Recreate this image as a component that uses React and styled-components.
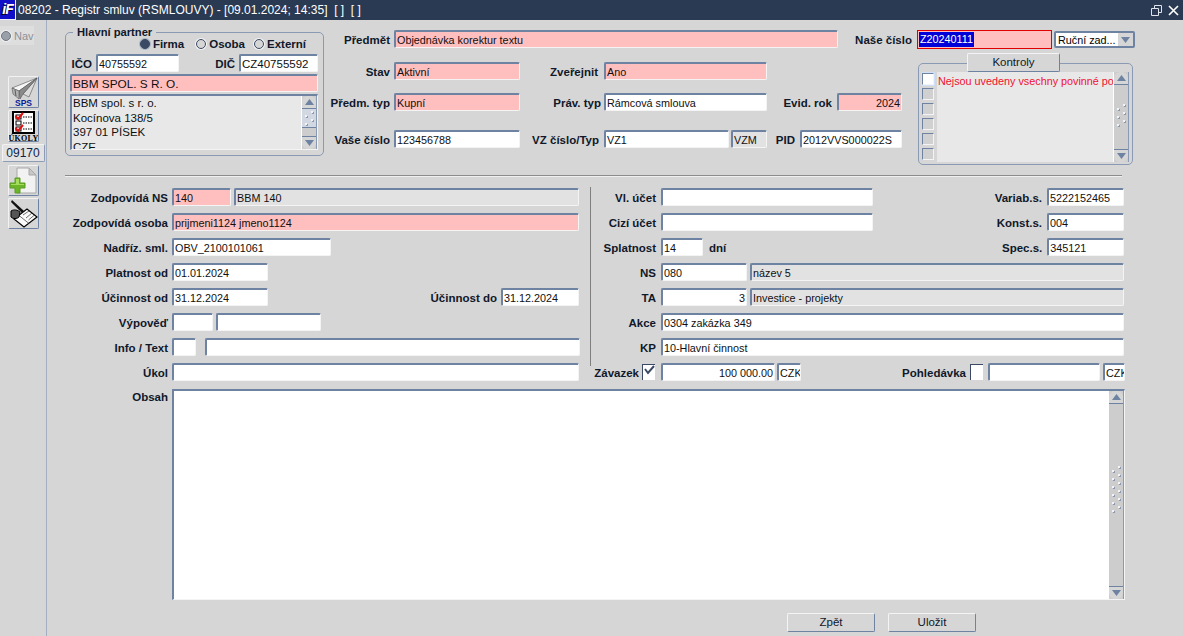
import React from "react"
import styled, { createGlobalStyle } from "styled-components"

const Global = createGlobalStyle`
  html, body { margin: 0; height: 100%; overflow: hidden; background: #d6d6d6; }
  body { font-family: "Liberation Sans", Arial, sans-serif; font-size: 12px; color: #000; }
`

const Window = styled.div`
  width: 1183px;
  height: 636px;
  display: flex;
  flex-direction: column;
  overflow: hidden;
`
const TitleBar = styled.div`
  height: 20px;
  background: #2a3a52;
  color: #fff;
  display: flex;
  align-items: center;
  font-size: 12px;
  flex: none;
`
const Logo = styled.div`
  width: 16px;
  height: 20px;
  box-sizing: border-box;
  background: #1010c8;
  border-right: 1px solid #f0f0fa;
  border-bottom: 1px solid #f0f0fa;
  color: #fff;
  font: italic bold 14px "Liberation Sans", sans-serif;
  letter-spacing: -1px;
  text-align: center;
  line-height: 18px;
  text-shadow: -1px 1px 0 #000;
  margin-right: 2px;
`
const TitleText = styled.span`
  flex: 1;
  white-space: pre;
`
const TitleIcons = styled.div`
  display: flex;
  gap: 6px;
  padding-right: 4px;
  align-items: center;
`
const Body = styled.div`
  flex: 1;
  display: flex;
  min-height: 0;
`
const Sidebar = styled.div`
  width: 46px;
  border-right: 1px solid #a4b0c2;
  flex: none;
  display: flex;
  flex-direction: column;
  align-items: center;
`
const NavRadio = styled.div`
  align-self: flex-start;
  width: 34px;
  height: 19px;
  margin-top: 6px;
  background: #dedede;
  color: #8c9098;
  display: flex;
  align-items: center;
  gap: 3px;
  font-size: 11px;
  padding-left: 1px;
  box-sizing: border-box;
  white-space: nowrap;
`
const NavDot = styled.span`
  width: 8px;
  height: 8px;
  flex: none;
  border-radius: 50%;
  background: #9aa0a8;
  border: 1px solid #6e7684;
  box-shadow: 0 0 0 1px #f0f0f0;
`
const ToolButton = styled.div`
  width: 31px;
  height: ${(p) => p.$h || 32}px;
  margin-top: ${(p) => p.$mt || 0}px;
  box-sizing: border-box;
  border: 1px solid;
  border-color: #f2f2f2 #6e82a2 #6e82a2 #f2f2f2;
  border-radius: 2px;
  background: #d6d6d6;
  display: flex;
  align-items: center;
  justify-content: center;
`
const CountBox = styled.div`
  width: 43px;
  height: 18px;
  margin-top: 2px;
  box-sizing: border-box;
  border: 1px solid;
  border-color: #f2f2f2 #8c9cb4 #8c9cb4 #f2f2f2;
  border-radius: 2px;
  background: #e2e2e2;
  color: #10244a;
  font-size: 12px;
  line-height: 16px;
  text-align: center;
`
const Main = styled.div`
  flex: 1;
  padding-left: 18px;
  min-width: 0;
`
const TopArea = styled.div`
  display: flex;
  height: 155px;
`
const Partner = styled.fieldset`
  width: 259px;
  height: 130px;
  margin: 6px 0 0;
  box-sizing: border-box;
  padding: 0 5px 0 4px;
  border: 1px solid #8a9ab4;
  border-radius: 5px;
  flex: none;
`
const Legend = styled.legend`
  font-weight: bold;
  font-size: 11.2px;
  line-height: 12px;
  padding: 0 4px;
  margin-left: 3px;
  color: #10182a;
`
const RadioRow = styled.div`
  display: flex;
  justify-content: flex-end;
  gap: 9px;
  padding-right: 12px;
  height: 16px;
  align-items: center;
  margin-top: -2px;
`
const RadioItem = styled.label`
  display: flex;
  align-items: center;
  gap: 3px;
  margin-right: ${(p) => p.$mr || 0}px;
  font-weight: bold;
  font-size: 11.5px;
  color: #10182a;
`
const RadioMark = styled.span`
  width: 8px;
  height: 8px;
  border-radius: 50%;
  background: ${(p) => (p.$on ? "#3a4a64" : "#d6d6d6")};
  border: 1px solid #3a4a64;
  box-shadow: 0 0 0 1px ${(p) => (p.$on ? "#a8b4c4" : "#f4f4f4")};
`
const Row = styled.div`
  display: flex;
  align-items: center;
  height: ${(p) => p.$h || 18}px;
  margin-top: ${(p) => p.$mt || 0}px;
`
const Label = styled.div`
  width: ${(p) => p.$w}px;
  padding-right: ${(p) => (p.$pr === undefined ? 4 : p.$pr)}px;
  padding-top: 2px;
  box-sizing: border-box;
  flex: none;
  text-align: right;
  font-weight: bold;
  font-size: 11.5px;
  color: #10182a;
  white-space: nowrap;
`
const colors = { pink: "#ffbfbf", gray: "#e2e2e2", white: "#ffffff" }
const Field = styled.div`
  width: ${(p) => p.$w}px;
  height: ${(p) => p.$h || 18}px;
  margin-left: ${(p) => p.$ml || 0}px;
  box-sizing: border-box;
  flex: none;
  background: ${(p) => colors[p.$c || "white"]};
  border: 1px solid;
  border-top: 2px solid #6e82a2;
  border-left: 2px solid #6e82a2;
  border-right-color: #f4f4f4;
  border-bottom-color: #f4f4f4;
  border-radius: 2px;
  padding: 0 1px;
  font-size: ${(p) => p.$fs || 10.8}px;
  line-height: 16px;
  text-align: ${(p) => (p.$right ? "right" : "left")};
  color: #101010;
  white-space: nowrap;
  overflow: hidden;
`
const ActiveField = styled.div`
  width: 135px;
  height: 19px;
  box-sizing: border-box;
  border: 1px solid #e00000;
  background: #ffbfbf;
  padding: 1px 1px 0;
  flex: none;
  font-size: 10.8px;
  line-height: 15px;
`
const Selected = styled.span`
  background: #0000d8;
  color: #fff;
  display: inline-block;
  padding: 0 1px;
`
const SelectBox = styled.div`
  width: 81px;
  height: 17px;
  margin: 1px 0 0 2px;
  box-sizing: border-box;
  border: 2px solid #6e82a2;
  border-radius: 2px;
  background: #fff;
  display: flex;
  flex: none;
  font-size: 10.8px;
  line-height: 14px;
  padding-left: 2px;
`
const SelectText = styled.span`
  flex: 1;
  white-space: nowrap;
`
const SelectArrow = styled.span`
  width: 15px;
  background: #d6d6d6;
  display: flex;
  align-items: center;
  justify-content: center;
`
const AddressBox = styled.div`
  margin-top: 2px;
  height: 56px;
  box-sizing: border-box;
  border-top: 2px solid #6e82a2;
  border-left: 2px solid #6e82a2;
  border-right: 1px solid #f4f4f4;
  border-bottom: 1px solid #f4f4f4;
  background: #e8e8e8;
  display: flex;
  overflow: hidden;
`
const AddressText = styled.div`
  flex: 1;
  padding: 0 0 0 1px;
  font-size: 11.5px;
  line-height: 14.7px;
  color: #101010;
`
const Scroll = styled.div`
  width: 14px;
  flex: none;
  background: #cdcdcd;
  border-left: 1px solid #fff;
  border-right: 1px solid #8a9ab4;
  display: flex;
  flex-direction: column;
  align-items: center;
`
const ScrollEnd = styled.div`
  width: 100%;
  height: 13px;
  flex: none;
  display: flex;
  align-items: center;
  justify-content: center;
  background: #d6d6d6;
  border-radius: ${(p) => (p.$edge === "bottom" ? "6px 6px 0 0" : "0 0 6px 6px")};
  box-sizing: border-box;
  border-${(p) => p.$edge}: 1px solid #6e82a2;
`
const Thumb = styled.div`
  width: 100%;
  flex: ${(p) => (p.$short ? "0 0 19px" : "1")};
  background: ${(p) => (p.$short ? "#d2d8e2" : "transparent")};
  border-bottom: ${(p) => (p.$short ? "1px solid #6e82a2" : "0")};
  box-sizing: border-box;
  padding-bottom: ${(p) => p.$lift || 0}px;
  display: flex;
  align-items: center;
  justify-content: center;
  margin-bottom: auto;
`
const Grip = styled.div`
  width: 8px;
  display: grid;
  grid-template-columns: 2px 2px;
  justify-content: space-between;
  row-gap: 2px;
`
const GripDot = styled.span`
  width: 2px;
  height: 2px;
  background: #f4f4f4;
  box-shadow: 1px 1px 0 #8a9ab4;
  margin-top: ${(p) => (p.$odd ? 0 : 4)}px;
`
const Center = styled.div`
  width: 593px;
  flex: none;
  padding-top: 10px;
`
const Right = styled.div`
  flex: none;
  padding-top: 10px;
  width: 221px;
`
const RightRow = styled.div`
  display: flex;
  align-items: flex-start;
  height: 18px;
`
const ChecksGroup = styled.div`
  margin: 15px 0 0 1px;
  width: 215px;
  height: 102px;
  box-sizing: border-box;
  border: 1px solid #8a9ab4;
  border-radius: 5px;
  position: relative;
  display: flex;
  padding: 8px 3px 2px 3px;
`
const ChecksTab = styled.div`
  position: absolute;
  left: 48px;
  top: -11px;
  width: 93px;
  height: 19px;
  box-sizing: border-box;
  border: 1px solid;
  border-color: #f4f4f4 #6e82a2 #6e82a2 #f4f4f4;
  border-radius: 2px;
  background: #d6d6d6;
  text-align: center;
  font-size: 11.5px;
  line-height: 17px;
  color: #10182a;
`
const CheckCol = styled.div`
  width: 15px;
  display: flex;
  flex-direction: column;
  gap: 3px;
  padding-top: 1px;
  flex: none;
`
const CheckBox = styled.div`
  width: 12px;
  height: 12px;
  box-sizing: border-box;
  border-top: 1px solid #6e82a2;
  border-left: 1px solid #6e82a2;
  border-right: 1px solid #f4f4f4;
  border-bottom: 1px solid #f4f4f4;
  background: ${(p) => (p.$on ? "#fff" : "#d0d0d0")};
  box-shadow: ${(p) => (p.$on ? "0 0 0 1px #cfe0f8" : "none")};
`
const ChecksList = styled.div`
  flex: 1;
  min-width: 0;
  background: #e8e8e8;
  color: #f01030;
  font-size: 10.8px;
  line-height: 14px;
  padding: 2px 0 0 1px;
  white-space: nowrap;
  overflow: hidden;
`
const Rule = styled.div`
  width: 1057px;
  height: 2px;
  background: #8c8c8c;
  border-bottom: 1px solid #f0f0f0;
  box-sizing: border-box;
`
const Lower = styled.div`
  display: flex;
  padding-top: 11px;
`
const Col = styled.div`
  display: flex;
  flex-direction: column;
  gap: 7px;
  width: ${(p) => p.$w}px;
  flex: none;
`
const Divider = styled.div`
  width: 1px;
  height: 179px;
  background: #808080;
  flex: none;
  margin-top: -1px;
`
const Unit = styled.span`
  font-weight: bold;
  font-size: 11.5px;
  margin-left: 6px;
  padding-top: 2px;
  color: #10182a;
`
const Tick = styled.div`
  width: 13px;
  height: 16px;
  flex: none;
  box-sizing: border-box;
  background: #fff;
  border-top: 1px solid #3a4a64;
  border-left: 1px solid #3a4a64;
  display: flex;
  align-items: flex-start;
  justify-content: center;
`
const MemoRow = styled.div`
  display: flex;
  align-items: flex-start;
  margin-top: 8px;
`
const Memo = styled.div`
  width: 953px;
  height: 211px;
  flex: none;
  box-sizing: border-box;
  background: #fff;
  border-top: 2px solid #6e82a2;
  border-left: 2px solid #6e82a2;
  border-right: 1px solid #f4f4f4;
  border-bottom: 1px solid #f4f4f4;
  display: flex;
  justify-content: flex-end;
`
const Actions = styled.div`
  display: flex;
  gap: 13px;
  margin: 13px 0 0 722px;
`
const ActionButton = styled.div`
  width: 88px;
  height: 19px;
  box-sizing: border-box;
  border: 1px solid;
  border-color: #f4f4f4 #6e82a2 #6e82a2 #f4f4f4;
  border-radius: 2px;
  text-align: center;
  font-size: 11.5px;
  line-height: 17px;
  color: #10182a;
`

const Up = () => (
  <svg width="9" height="6" viewBox="0 0 9 6"><path d="M4.5 0 9 6H0z" fill="#6e82a2" /></svg>
)
const Down = () => (
  <svg width="9" height="6" viewBox="0 0 9 6"><path d="M0 0h9L4.5 6z" fill="#6e82a2" /></svg>
)

const ScrollBar = ({ dots, short, lift }) => (
  <Scroll>
    <ScrollEnd $edge="bottom"><Up /></ScrollEnd>
    <Thumb $short={short} $lift={lift}>
      <Grip>
        {Array.from({ length: dots }).map((_, i) => (
          <GripDot key={i} $odd={i % 2 === 1} />
        ))}
      </Grip>
    </Thumb>
    <ScrollEnd $edge="top"><Down /></ScrollEnd>
  </Scroll>
)

const PlaneIcon = () => (
  <svg width="29" height="30" viewBox="0 0 29 30">
    <path d="M28 1 3 11l7 3z" fill="#f6f6f6" stroke="#666" strokeWidth="0.7" />
    <path d="M28 1 14 17l6 3z" fill="#dcdcdc" stroke="#666" strokeWidth="0.7" />
    <path d="M28 1 10 14l1 8 3-5z" fill="#8a8a8a" stroke="#555" strokeWidth="0.6" />
    <path d="M3 11l1 6 6 5v-8z" fill="#b4b4b4" stroke="#555" strokeWidth="0.6" />
    <path d="M6 13l1 6" stroke="#444" strokeWidth="0.8" fill="none" />
    <text x="14.5" y="28.5" textAnchor="middle" fontFamily="Liberation Sans" fontSize="8.5" fontWeight="bold" fill="#0a1a9a">SPS</text>
  </svg>
)
const TasksIcon = () => (
  <svg width="29" height="30" viewBox="0 0 29 30">
    <rect x="4" y="1" width="21" height="21" fill="#fff" stroke="#000" strokeWidth="2" />
    <rect x="7" y="4" width="5" height="4" fill="#fff" stroke="#000" />
    <rect x="7" y="10" width="5" height="4" fill="#fff" stroke="#000" />
    <rect x="7" y="16" width="5" height="4" fill="#fff" stroke="#000" />
    <path d="M6.5 5l2.5 3 5-6M6.5 17l2.5 3 5-6" stroke="#e01010" strokeWidth="2" fill="none" />
    <path d="M14 6h9M14 12h9M14 18h9" stroke="#000" strokeDasharray="1.5 1" fill="none" />
    <text x="14.5" y="29.5" textAnchor="middle" fontFamily="Liberation Serif" fontSize="8" fontWeight="bold" letterSpacing="0.3" fill="#000">ÚKOLY</text>
  </svg>
)
const AddIcon = () => (
  <svg width="29" height="29" viewBox="0 0 29 29">
    <path d="M8 2h12l7 7v18H8z" fill="#f2f2f2" stroke="#a8a8a8" />
    <path d="M20 2v7h7z" fill="#c8c8c8" stroke="#a8a8a8" />
    <path d="M6 12h5v5h5v5h-5v5H6v-5H1v-5h5z" fill="#6cb52a" stroke="#5a9c22" />
    <path d="M7 13h3v5H7zM2 18h13v1H2z" fill="#a4dc5c" />
  </svg>
)
const SignIcon = () => (
  <svg width="29" height="29" viewBox="0 0 29 29">
    <path d="M5 20 18 10l10 8-13 10z" fill="#fafafa" stroke="#000" strokeWidth="1.2" />
    <path d="M10 16.500l10 8M20 12l-6 4M23 14l-6 5M25.500 16l-6 5" stroke="#333" strokeWidth="0.7" fill="none" />
    <path d="M3 1l12 11-2 2L2 3z" fill="#111" />
    <path d="M2 12c3-2 7-1 9 1l-1 5c-2 2-6 2-8 0z" fill="#555" stroke="#000" />
  </svg>
)

export default function App() {
  return (
    <>
      <Global />
      <Window>
        <TitleBar>
          <Logo>iF</Logo>
          <TitleText>08202 - Registr smluv (RSMLOUVY) - [09.01.2024; 14:35]  [ ]  [ ]</TitleText>
          <TitleIcons>
            <svg width="11" height="11" viewBox="0 0 11 11" fill="none" stroke="#dfe4ec">
              <path d="M.5 3.5h7v7h-7zM3.5 3V.5h7v7H8" />
            </svg>
            <svg width="11" height="11" viewBox="0 0 11 11" stroke="#fff" strokeWidth="1.6">
              <path d="M1 1l9 9M10 1l-9 9" />
            </svg>
          </TitleIcons>
        </TitleBar>
        <Body>
          <Sidebar>
            <NavRadio><NavDot />Nav</NavRadio>
            <ToolButton $mt={31}><PlaneIcon /></ToolButton>
            <ToolButton $mt={2}><TasksIcon /></ToolButton>
            <CountBox>09170</CountBox>
            <ToolButton $mt={3} $h={31}><AddIcon /></ToolButton>
            <ToolButton $mt={2} $h={31}><SignIcon /></ToolButton>
          </Sidebar>
          <Main>
            <TopArea>
              <Partner>
                <Legend>Hlavní partner</Legend>
                <RadioRow>
                  <RadioItem $mr={3}><RadioMark $on />Firma</RadioItem>
                  <RadioItem><RadioMark />Osoba</RadioItem>
                  <RadioItem><RadioMark />Externí</RadioItem>
                </RadioRow>
                <Row $mt={2}>
                  <Label $w={26}>IČO</Label>
                  <Field $w={83}>40755592</Field>
                  <Label $w={60}>DIČ</Label>
                  <Field $w={79} $fs={11.5}>CZ40755592</Field>
                </Row>
                <Row $mt={2}>
                  <Field $w={248} $c="pink" $fs={11.8}>BBM SPOL. S R. O.</Field>
                </Row>
                <AddressBox>
                  <AddressText>
                    BBM spol. s r. o.<br />
                    Kocínova 138/5<br />
                    397 01 PÍSEK<br />
                    CZE
                  </AddressText>
                  <ScrollBar dots={4} short />
                </AddressBox>
              </Partner>
              <Center>
                <Row>
                  <Label $w={70}>Předmět</Label>
                  <Field $w={444} $c="pink">Objednávka korektur textu</Field>
                  <Label $w={79} $pr={5}>Naše číslo</Label>
                </Row>
                <Row $mt={14}>
                  <Label $w={70}>Stav</Label>
                  <Field $w={126} $c="pink">Aktivní</Field>
                  <Label $w={84} $pr={6}>Zveřejnit</Label>
                  <Field $w={163} $c="pink">Ano</Field>
                </Row>
                <Row $mt={13}>
                  <Label $w={70}>Předm. typ</Label>
                  <Field $w={126} $c="pink">Kupní</Field>
                  <Label $w={84} $pr={3}>Práv. typ</Label>
                  <Field $w={163}>Rámcová smlouva</Field>
                  <Label $w={70} $pr={5}>Evid. rok</Label>
                  <Field $w={65} $c="pink" $right>2024</Field>
                </Row>
                <Row $mt={19}>
                  <Label $w={70}>Vaše číslo</Label>
                  <Field $w={126}>123456788</Field>
                  <Label $w={84} $pr={5}>VZ číslo/Typ</Label>
                  <Field $w={125}>VZ1</Field>
                  <Field $w={36} $ml={2} $c="gray">VZM</Field>
                  <Label $w={33} $pr={5}>PID</Label>
                  <Field $w={102}>2012VVS000022S</Field>
                </Row>
              </Center>
              <Right>
                <RightRow>
                  <ActiveField><Selected>Z20240111</Selected></ActiveField>
                  <SelectBox>
                    <SelectText>Ruční zad...</SelectText>
                    <SelectArrow><Down /></SelectArrow>
                  </SelectBox>
                </RightRow>
                <ChecksGroup>
                  <ChecksTab>Kontroly</ChecksTab>
                  <CheckCol>
                    <CheckBox $on />
                    <CheckBox />
                    <CheckBox />
                    <CheckBox />
                    <CheckBox />
                    <CheckBox />
                  </CheckCol>
                  <ChecksList>Nejsou uvedeny vsechny povinné po</ChecksList>
                  <ScrollBar dots={6} lift={4} />
                </ChecksGroup>
              </Right>
            </TopArea>
            <Rule />
            <Lower>
              <Col $w={525}>
                <Row>
                  <Label $w={107}>Zodpovídá NS</Label>
                  <Field $w={59} $c="pink">140</Field>
                  <Field $w={345} $ml={3} $c="gray">BBM 140</Field>
                </Row>
                <Row>
                  <Label $w={107}>Zodpovídá osoba</Label>
                  <Field $w={407} $c="pink">prijmeni1124 jmeno1124</Field>
                </Row>
                <Row>
                  <Label $w={107}>Nadříz. sml.</Label>
                  <Field $w={159}>OBV_2100101061</Field>
                </Row>
                <Row>
                  <Label $w={107}>Platnost od</Label>
                  <Field $w={96}>01.01.2024</Field>
                </Row>
                <Row>
                  <Label $w={107}>Účinnost od</Label>
                  <Field $w={96}>31.12.2024</Field>
                  <Label $w={233}>Účinnost do</Label>
                  <Field $w={78}>31.12.2024</Field>
                </Row>
                <Row>
                  <Label $w={107}>Výpověď</Label>
                  <Field $w={41}></Field>
                  <Field $w={105} $ml={3}></Field>
                </Row>
                <Row>
                  <Label $w={107}>Info / Text</Label>
                  <Field $w={24}></Field>
                  <Field $w={375} $ml={9}></Field>
                </Row>
                <Row>
                  <Label $w={107}>Úkol</Label>
                  <Field $w={407}></Field>
                </Row>
              </Col>
              <Divider />
              <Col $w={535}>
                <Row>
                  <Label $w={70} $pr={5}>Vl. účet</Label>
                  <Field $w={212}></Field>
                  <Label $w={174} $pr={5}>Variab.s.</Label>
                  <Field $w={77}>5222152465</Field>
                </Row>
                <Row>
                  <Label $w={70} $pr={5}>Cizí účet</Label>
                  <Field $w={212}></Field>
                  <Label $w={174} $pr={5}>Konst.s.</Label>
                  <Field $w={77}>004</Field>
                </Row>
                <Row>
                  <Label $w={70} $pr={5}>Splatnost</Label>
                  <Field $w={42}>14</Field>
                  <Unit>dní</Unit>
                  <Label $w={321} $pr={5}>Spec.s.</Label>
                  <Field $w={77}>345121</Field>
                </Row>
                <Row>
                  <Label $w={70} $pr={5}>NS</Label>
                  <Field $w={86}>080</Field>
                  <Field $w={374} $ml={3} $c="gray">název 5</Field>
                </Row>
                <Row>
                  <Label $w={70} $pr={5}>TA</Label>
                  <Field $w={86} $right>3</Field>
                  <Field $w={374} $ml={3} $c="gray">Investice - projekty</Field>
                </Row>
                <Row>
                  <Label $w={70} $pr={5}>Akce</Label>
                  <Field $w={463}>0304 zakázka 349</Field>
                </Row>
                <Row>
                  <Label $w={70} $pr={5}>KP</Label>
                  <Field $w={463}>10-Hlavní činnost</Field>
                </Row>
                <Row>
                  <Label $w={51} $pr={3}>Závazek</Label>
                  <Tick>
                    <svg width="11" height="10" viewBox="0 0 11 10"><path d="M1 4l3 4 6-7" stroke="#3a4a64" strokeWidth="2" fill="none" /></svg>
                  </Tick>
                  <Field $w={114} $ml={6} $right>100 000.00</Field>
                  <Field $w={24} $ml={2}>CZK</Field>
                  <Label $w={169}>Pohledávka</Label>
                  <Tick />
                  <Field $w={112} $ml={5}></Field>
                  <Field $w={22} $ml={3}>CZK</Field>
                </Row>
              </Col>
            </Lower>
            <MemoRow>
              <Label $w={107}>Obsah</Label>
              <Memo><ScrollBar dots={12} lift={12} /></Memo>
            </MemoRow>
            <Actions>
              <ActionButton>Zpět</ActionButton>
              <ActionButton>Uložit</ActionButton>
            </Actions>
          </Main>
        </Body>
      </Window>
    </>
  )
}
